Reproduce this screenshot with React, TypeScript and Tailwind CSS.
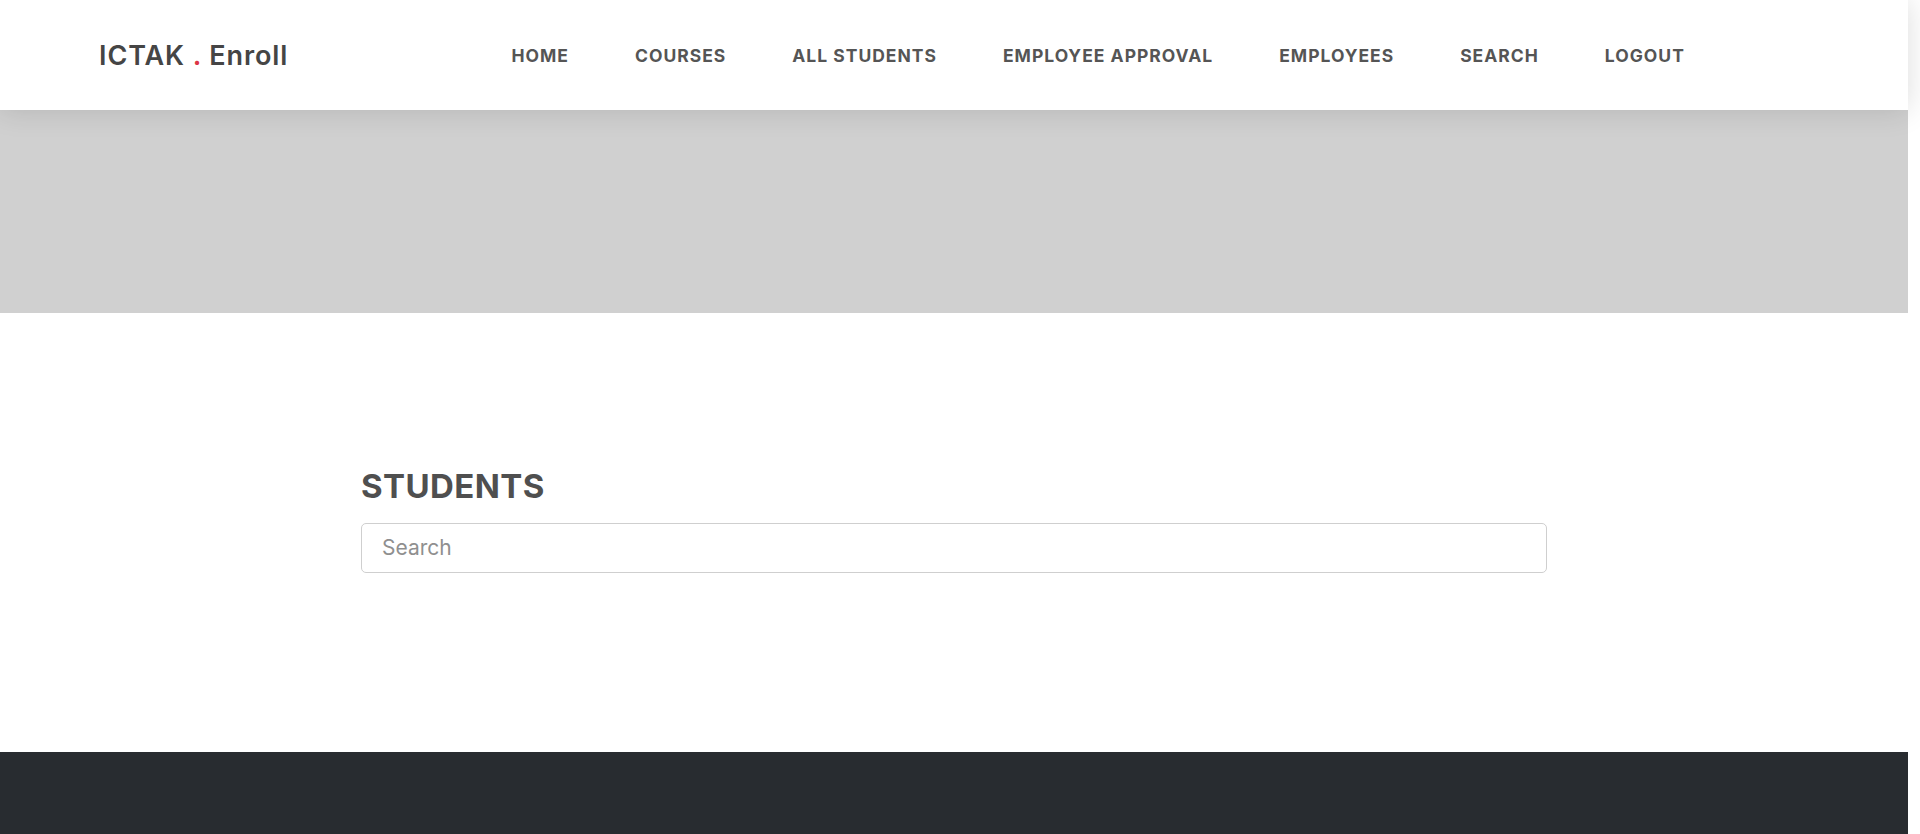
import React from "react";

const navItems = ["HOME", "COURSES", "ALL STUDENTS", "EMPLOYEE APPROVAL", "EMPLOYEES", "SEARCH", "LOGOUT"];

export default function App() {
  return (
    <div className="w-[1920px] min-h-[834px] bg-white font-['Inter',sans-serif]">
      <div className="w-[1908px]">
        <header className="relative z-10 flex h-[110px] items-center bg-white pl-[99px] pt-[3px] shadow-[0_0_28px_rgba(0,0,0,0.14)]">
          <a className="text-[27px] font-semibold tracking-[0.9px] text-[#454545] whitespace-nowrap">
            ICTAK <span className="text-[#dc3545]">.</span> Enroll
          </a>
          <nav className="flex flex-1 justify-center">
            <ul className="flex items-center gap-[66px]">
              {navItems.map((item) => (
                <li key={item} className="text-[17.5px] font-bold tracking-[1px] text-[#555555] whitespace-nowrap">
                  {item}
                </li>
              ))}
            </ul>
          </nav>
        </header>
        <div className="h-[203px] bg-[#d0d0d0]" />
        <main className="flex h-[439px] justify-center bg-white pt-[154px]">
          <div className="w-[1186px]">
            <h2 className="text-[33px] font-bold leading-[1.2] tracking-[0.4px] text-[#4f4f4f]">STUDENTS</h2>
            <input
              type="text"
              placeholder="Search"
              className="mt-[16px] h-[50px] w-full rounded-[5px] border border-[#cfcfcf] px-[20px] text-[21px] text-[#555] placeholder:text-[#8f8f8f] outline-none"
            />
          </div>
        </main>
        <footer className="h-[82px] bg-[#282c30]" />
      </div>
    </div>
  );
}
